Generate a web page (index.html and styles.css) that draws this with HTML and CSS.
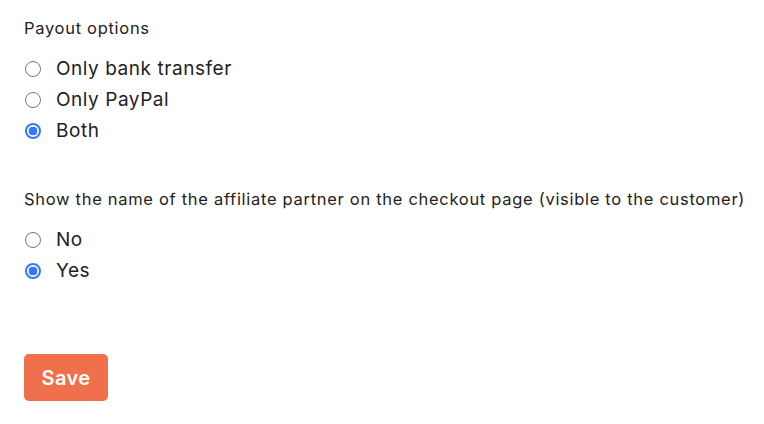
FILE: index.html
```html
<!DOCTYPE html>
<html>
<head>
<meta charset="utf-8">
<link rel="stylesheet" href="styles.css">
</head>
<body>
<form class="settings">
  <fieldset class="group">
    <legend class="group-title">Payout options</legend>
    <label class="option"><input type="radio" name="payout"><span>Only bank transfer</span></label>
    <label class="option"><input type="radio" name="payout"><span>Only PayPal</span></label>
    <label class="option"><input type="radio" name="payout" checked><span>Both</span></label>
  </fieldset>
  <fieldset class="group">
    <legend class="group-title">Show the name of the affiliate partner on the checkout page (visible to the customer)</legend>
    <label class="option"><input type="radio" name="show"><span>No</span></label>
    <label class="option"><input type="radio" name="show" checked><span>Yes</span></label>
  </fieldset>
  <button type="button" class="save">Save</button>
</form>
</body>
</html>
```
FILE: styles.css
```css
html, body {
  margin: 0;
  padding: 0;
  background: #ffffff;
}
body {
  font-family: Inter, "Liberation Sans", Arial, sans-serif;
  color: #222222;
}
.settings {
  padding: 18px 24px;
  display: flex;
  flex-direction: column;
  align-items: flex-start;
}
.group {
  border: 0;
  margin: 0 0 43px 0;
  padding: 0;
  display: flex;
  flex-direction: column;
}
.group-title {
  padding: 0;
  font-size: 16.5px;
  letter-spacing: 0.7px;
  line-height: 20px;
  margin-bottom: 15px;
  float: left;
  width: 100%;
  white-space: nowrap;
}
.option {
  display: flex;
  align-items: center;
  height: 31px;
  font-size: 19px;
  letter-spacing: 0.55px;
  clear: both;
}
.option input {
  appearance: none;
  -webkit-appearance: none;
  width: 16px;
  height: 16px;
  margin: 0 15px 0 1px;
  border: 1.3px solid #767676;
  border-radius: 50%;
  background: #fff;
  box-sizing: border-box;
}
.option input:checked {
  border: 2px solid #3478f6;
  background: radial-gradient(circle, #3478f6 0 4.2px, #fff 4.6px);
}
.save {
  margin-top: 25px;
  width: 84px;
  height: 47px;
  border: 0;
  border-radius: 5px;
  background: #f0704c;
  color: #ffffff;
  font-family: Inter, "Liberation Sans", Arial, sans-serif;
  font-weight: 600;
  font-size: 20px;
  letter-spacing: 0.4px;
}
```
